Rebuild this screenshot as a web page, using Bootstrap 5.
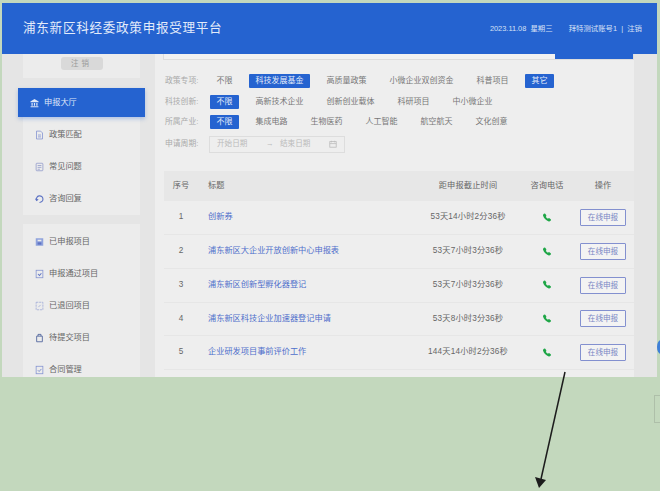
<!DOCTYPE html>
<html lang="zh-CN">
<head>
<meta charset="utf-8">
<title>浦东新区科经委政策申报受理平台</title>
<link rel="stylesheet" href="https://cdn.jsdelivr.net/npm/bootstrap@5.3.0/dist/css/bootstrap.min.css">
<style>
html,body{height:100%;overflow:hidden}
body{background:#c3d8bd;font-family:"Liberation Sans","Noto Sans CJK SC",sans-serif;font-size:8px;color:#666;padding:3px 3px 0 2px;position:relative}
.blurbox{filter:blur(.45px)}
.shell{height:374px;background:#e5e5e5;overflow:hidden}
.topbar{height:51px;background:#2563d0;color:#d5e1f6;padding:0 15px 0 21px}
.topbar h1{font-size:12.6px;font-weight:400;letter-spacing:.7px;margin:0;color:#e3ebfa}
.topbar .meta{font-size:7.4px;gap:16px}
.sidecol{width:153px;padding:0 15px 0 21px;flex:none}
.userbox{height:24px;background:#ececec;margin-bottom:10px}
.logout{width:42px;height:13px;line-height:13px;background:#d9d9d9;color:#999;border-radius:3px;text-align:center;font-size:7.5px;letter-spacing:3px;margin-top:3px}
.activeitem{height:29px;background:#2563d0;color:#dfe8f8;margin:0 -5px;padding:1px 0 0 12px;gap:5px;box-shadow:0 2px 4px rgba(37,99,208,.3);position:relative;font-size:8.2px}
.sidepanel{background:#ececec;padding-top:2px;margin-bottom:9px}
.sideitem{height:32px;padding-left:12px;gap:5px;color:#666;font-size:8.2px}
.sideitem svg,.activeitem svg{width:9px;height:10px;flex:none}
.maincol{width:479px;flex:none;background:#eee;padding:0 0 0 9px}
.topstrip{height:6px;background:#f1f1f1;border:1px solid #ddd;border-top:0;overflow:hidden;margin:0 0 14px -1px}
.topstrip .fillbar{width:78px;background:#2563d0;border-radius:0}
.frow{height:14px;margin-bottom:6.5px;padding-left:1px}
.flabel{width:45px;color:#aaa;flex:none;font-size:7.8px}
.fitems{gap:10px}
.chip{padding:0 6.5px;height:14px;line-height:14.5px;color:#777;border-radius:1px;white-space:nowrap}
.chip-on{background:#2563d0;color:#e3ebfa}
.daterow{height:17px;margin-bottom:18.5px;padding-left:1px}
.datebox{width:136px;height:17px;border:1px solid #ddd;color:#bbb;padding:0 7px;font-size:7.6px;margin-left:-1px}
.datebox svg{width:8px;height:8px}
.datatable{width:470px;margin:0;--bs-table-bg:transparent;table-layout:fixed;font-size:8.2px}
.datatable th,.datatable td{padding:0;vertical-align:middle;border-bottom:1px solid #e6e6e6;color:#666;font-weight:400}
.datatable thead th{height:30px;background:#e7e7e7;border:0}
.datatable tbody td{height:33.7px}
.datatable .titlecell{padding-left:10px}
.datatable .timecell{letter-spacing:.2px}
.datatable .opcell{padding-left:6px}
.linktitle{color:#4f6fcb;text-decoration:none}
.applybtn{--bs-btn-padding-x:0;--bs-btn-padding-y:0;--bs-btn-font-size:7.6px;--bs-btn-color:#7a86c4;--bs-btn-border-color:#8390cf;--bs-btn-border-radius:1px;width:46px;height:17px;line-height:15px;background:#f3f3f3}
.phone{width:8px;height:9px;fill:#1fa647;vertical-align:middle}
.arrowart{position:absolute;left:0;top:0;width:660px;height:491px;pointer-events:none}
.edgedot{position:absolute;left:655px;top:337px;width:8px;height:14px;border-radius:50%;background:#3f7fd8}
.ghostbox{position:absolute;left:652px;top:392px;width:12px;height:28px;border:1px solid #aebfa9;border-right:0}
</style>
</head>
<body>
<div class="blurbox">
<div class="shell">
  <header class="topbar d-flex align-items-center justify-content-between">
    <h1>浦东新区科经委政策申报受理平台</h1>
    <div class="meta d-flex">
      <span>2023.11.08&nbsp; 星期三</span>
      <span>拜特测试账号1 &nbsp;|&nbsp; 注销</span>
    </div>
  </header>
  <div class="d-flex">
    <aside class="sidecol">
      <div class="userbox d-flex justify-content-center"><div class="logout">注销</div></div>
      <div class="activeitem d-flex align-items-center">
        <svg viewBox="0 0 12 12" fill="#dfe8f8"><path d="M6 0.5 11.5 4v1H.5V4zM2 6h1.6v3.5H2zM5.2 6h1.6v3.5H5.2zM8.4 6H10v3.5H8.4zM.8 10.2h10.4V11.5H.8z"/></svg>
        <span>申报大厅</span>
      </div>
      <div class="sidepanel">
        <div class="sideitem d-flex align-items-center">
          <svg viewBox="0 0 12 12" fill="none" stroke="#7f8fd0"><path d="M2 .8h5.5L10 3.3v8H2z"/><path d="M4 6h4M4 8.5h4"/></svg><span>政策匹配</span></div>
        <div class="sideitem d-flex align-items-center">
          <svg viewBox="0 0 12 12" fill="none" stroke="#8c96c8"><rect x="1.5" y="1" width="9" height="10" rx="1"/><path d="M3.5 4h5M3.5 6.5h5M3.5 9h3"/></svg><span>常见问题</span></div>
        <div class="sideitem d-flex align-items-center">
          <svg viewBox="0 0 12 12" fill="none" stroke="#5f74c4" stroke-width="1.5"><path d="M2 7.5A4.4 4.4 0 1 1 6 10.6"/><path d="M.8 5.5 2.2 8l2-1.6"/></svg><span>咨询回复</span></div>
      </div>
      <div class="sidepanel mb-0">
        <div class="sideitem d-flex align-items-center">
          <svg viewBox="0 0 12 12"><rect x="1" y="1" width="10" height="10" fill="#8fa2dc"/><rect x="3.5" y="3" width="5" height="2" fill="#ececec"/><rect x="3.5" y="6.5" width="5" height="3" fill="#5f74c4"/></svg><span>已申报项目</span></div>
        <div class="sideitem d-flex align-items-center">
          <svg viewBox="0 0 12 12" fill="none" stroke="#7f8fd0"><rect x="1.5" y="1" width="9" height="10"/><path d="M4 6l2 2 2.5-3" stroke="#5f74c4" stroke-width="1.4"/></svg><span>申报通过项目</span></div>
        <div class="sideitem d-flex align-items-center">
          <svg viewBox="0 0 12 12" fill="none" stroke="#9aa6d6"><rect x="1.5" y="1" width="9" height="10" stroke-dasharray="3 1"/><path d="M7.5 4.5 4.5 7.5"/></svg><span>已退回项目</span></div>
        <div class="sideitem d-flex align-items-center">
          <svg viewBox="0 0 12 12" fill="none" stroke="#55699f" stroke-width="1.2"><path d="M2.2 3.5h7.6V11H2.2zM4 3.5V1.2h4v2.3"/></svg><span>待提交项目</span></div>
        <div class="sideitem d-flex align-items-center">
          <svg viewBox="0 0 12 12" fill="none" stroke="#7f8fd0"><rect x="1.5" y="1" width="9" height="10"/><path d="M3.8 6.3l1.7 1.7 3-3.4" stroke="#5f74c4"/></svg><span>合同管理</span></div>
      </div>
    </aside>
    <main class="maincol">
      <div class="topstrip d-flex justify-content-end"><div class="fillbar"></div></div>
      <div class="frow d-flex align-items-center"><div class="flabel">政策专项:</div>
        <div class="fitems d-flex"><span class="chip">不限</span><span class="chip chip-on">科技发展基金</span><span class="chip">高质量政策</span><span class="chip">小微企业双创资金</span><span class="chip">科普项目</span><span class="chip chip-on">其它</span></div></div>
      <div class="frow d-flex align-items-center"><div class="flabel">科技创新:</div>
        <div class="fitems d-flex"><span class="chip chip-on">不限</span><span class="chip">高新技术企业</span><span class="chip">创新创业载体</span><span class="chip">科研项目</span><span class="chip">中小微企业</span></div></div>
      <div class="frow d-flex align-items-center"><div class="flabel">所属产业:</div>
        <div class="fitems d-flex"><span class="chip chip-on">不限</span><span class="chip">集成电路</span><span class="chip">生物医药</span><span class="chip">人工智能</span><span class="chip">航空航天</span><span class="chip">文化创意</span></div></div>
      <div class="daterow d-flex align-items-center"><div class="flabel">申请周期:</div>
        <div class="datebox d-flex align-items-center justify-content-between"><span>开始日期</span><span>→&nbsp;&nbsp; 结束日期</span>
          <svg viewBox="0 0 10 10" fill="none" stroke="#bbb"><rect x="1" y="2" width="8" height="7"/><path d="M1 4.5h8M3 1v2M7 1v2"/></svg></div></div>
      <table class="table datatable">
        <colgroup><col style="width:34px"><col style="width:210px"><col style="width:120px"><col style="width:38px"><col></colgroup>
        <thead><tr><th class="text-center">序号</th><th class="titlecell">标题</th><th class="text-center timecell">距申报截止时间</th><th class="text-center">咨询电话</th><th class="text-center opcell">操作</th></tr></thead>
        <tbody>
          <tr><td class="text-center">1</td><td class="titlecell"><a class="linktitle" href="#">创新券</a></td><td class="text-center timecell">53天14小时2分36秒</td><td class="text-center"><svg class="phone" viewBox="0 0 16 16"><path d="M1.885.511a1.745 1.745 0 0 1 2.61.163L6.29 2.98c.329.423.445.974.315 1.494l-.547 2.19a.678.678 0 0 0 .178.643l2.457 2.457a.678.678 0 0 0 .644.178l2.189-.547a1.745 1.745 0 0 1 1.494.315l2.306 1.794c.829.645.905 1.87.163 2.611l-1.034 1.034c-.74.74-1.846 1.065-2.877.702a18.634 18.634 0 0 1-7.01-4.42 18.634 18.634 0 0 1-4.42-7.009c-.362-1.03-.037-2.137.703-2.877L1.885.511z"/></svg></td><td class="text-center opcell"><a class="btn applybtn" href="#">在线申报</a></td></tr>
          <tr><td class="text-center">2</td><td class="titlecell"><a class="linktitle" href="#">浦东新区大企业开放创新中心申报表</a></td><td class="text-center timecell">53天7小时3分36秒</td><td class="text-center"><svg class="phone" viewBox="0 0 16 16"><path d="M1.885.511a1.745 1.745 0 0 1 2.61.163L6.29 2.98c.329.423.445.974.315 1.494l-.547 2.19a.678.678 0 0 0 .178.643l2.457 2.457a.678.678 0 0 0 .644.178l2.189-.547a1.745 1.745 0 0 1 1.494.315l2.306 1.794c.829.645.905 1.87.163 2.611l-1.034 1.034c-.74.74-1.846 1.065-2.877.702a18.634 18.634 0 0 1-7.01-4.42 18.634 18.634 0 0 1-4.42-7.009c-.362-1.03-.037-2.137.703-2.877L1.885.511z"/></svg></td><td class="text-center opcell"><a class="btn applybtn" href="#">在线申报</a></td></tr>
          <tr><td class="text-center">3</td><td class="titlecell"><a class="linktitle" href="#">浦东新区创新型孵化器登记</a></td><td class="text-center timecell">53天7小时3分36秒</td><td class="text-center"><svg class="phone" viewBox="0 0 16 16"><path d="M1.885.511a1.745 1.745 0 0 1 2.61.163L6.29 2.98c.329.423.445.974.315 1.494l-.547 2.19a.678.678 0 0 0 .178.643l2.457 2.457a.678.678 0 0 0 .644.178l2.189-.547a1.745 1.745 0 0 1 1.494.315l2.306 1.794c.829.645.905 1.87.163 2.611l-1.034 1.034c-.74.74-1.846 1.065-2.877.702a18.634 18.634 0 0 1-7.01-4.42 18.634 18.634 0 0 1-4.42-7.009c-.362-1.03-.037-2.137.703-2.877L1.885.511z"/></svg></td><td class="text-center opcell"><a class="btn applybtn" href="#">在线申报</a></td></tr>
          <tr><td class="text-center">4</td><td class="titlecell"><a class="linktitle" href="#">浦东新区科技企业加速器登记申请</a></td><td class="text-center timecell">53天8小时3分36秒</td><td class="text-center"><svg class="phone" viewBox="0 0 16 16"><path d="M1.885.511a1.745 1.745 0 0 1 2.61.163L6.29 2.98c.329.423.445.974.315 1.494l-.547 2.19a.678.678 0 0 0 .178.643l2.457 2.457a.678.678 0 0 0 .644.178l2.189-.547a1.745 1.745 0 0 1 1.494.315l2.306 1.794c.829.645.905 1.87.163 2.611l-1.034 1.034c-.74.74-1.846 1.065-2.877.702a18.634 18.634 0 0 1-7.01-4.42 18.634 18.634 0 0 1-4.42-7.009c-.362-1.03-.037-2.137.703-2.877L1.885.511z"/></svg></td><td class="text-center opcell"><a class="btn applybtn" href="#">在线申报</a></td></tr>
          <tr><td class="text-center">5</td><td class="titlecell"><a class="linktitle" href="#">企业研发项目事前评价工作</a></td><td class="text-center timecell">144天14小时2分36秒</td><td class="text-center"><svg class="phone" viewBox="0 0 16 16"><path d="M1.885.511a1.745 1.745 0 0 1 2.61.163L6.29 2.98c.329.423.445.974.315 1.494l-.547 2.19a.678.678 0 0 0 .178.643l2.457 2.457a.678.678 0 0 0 .644.178l2.189-.547a1.745 1.745 0 0 1 1.494.315l2.306 1.794c.829.645.905 1.87.163 2.611l-1.034 1.034c-.74.74-1.846 1.065-2.877.702a18.634 18.634 0 0 1-7.01-4.42 18.634 18.634 0 0 1-4.42-7.009c-.362-1.03-.037-2.137.703-2.877L1.885.511z"/></svg></td><td class="text-center opcell"><a class="btn applybtn" href="#">在线申报</a></td></tr>
        </tbody>
      </table>
    </main>
  </div>
</div>
<div class="edgedot"></div>
<div class="ghostbox"></div>
<svg class="arrowart" viewBox="0 0 660 491"><line x1="563" y1="369" x2="539" y2="476" stroke="#1c1c1c" stroke-width="1.5"/><polygon points="533,474 544,477 537,485" fill="#1c1c1c"/></svg>
</div>
<script src="https://cdn.jsdelivr.net/npm/bootstrap@5.3.0/dist/js/bootstrap.bundle.min.js"></script>
</body>
</html>
